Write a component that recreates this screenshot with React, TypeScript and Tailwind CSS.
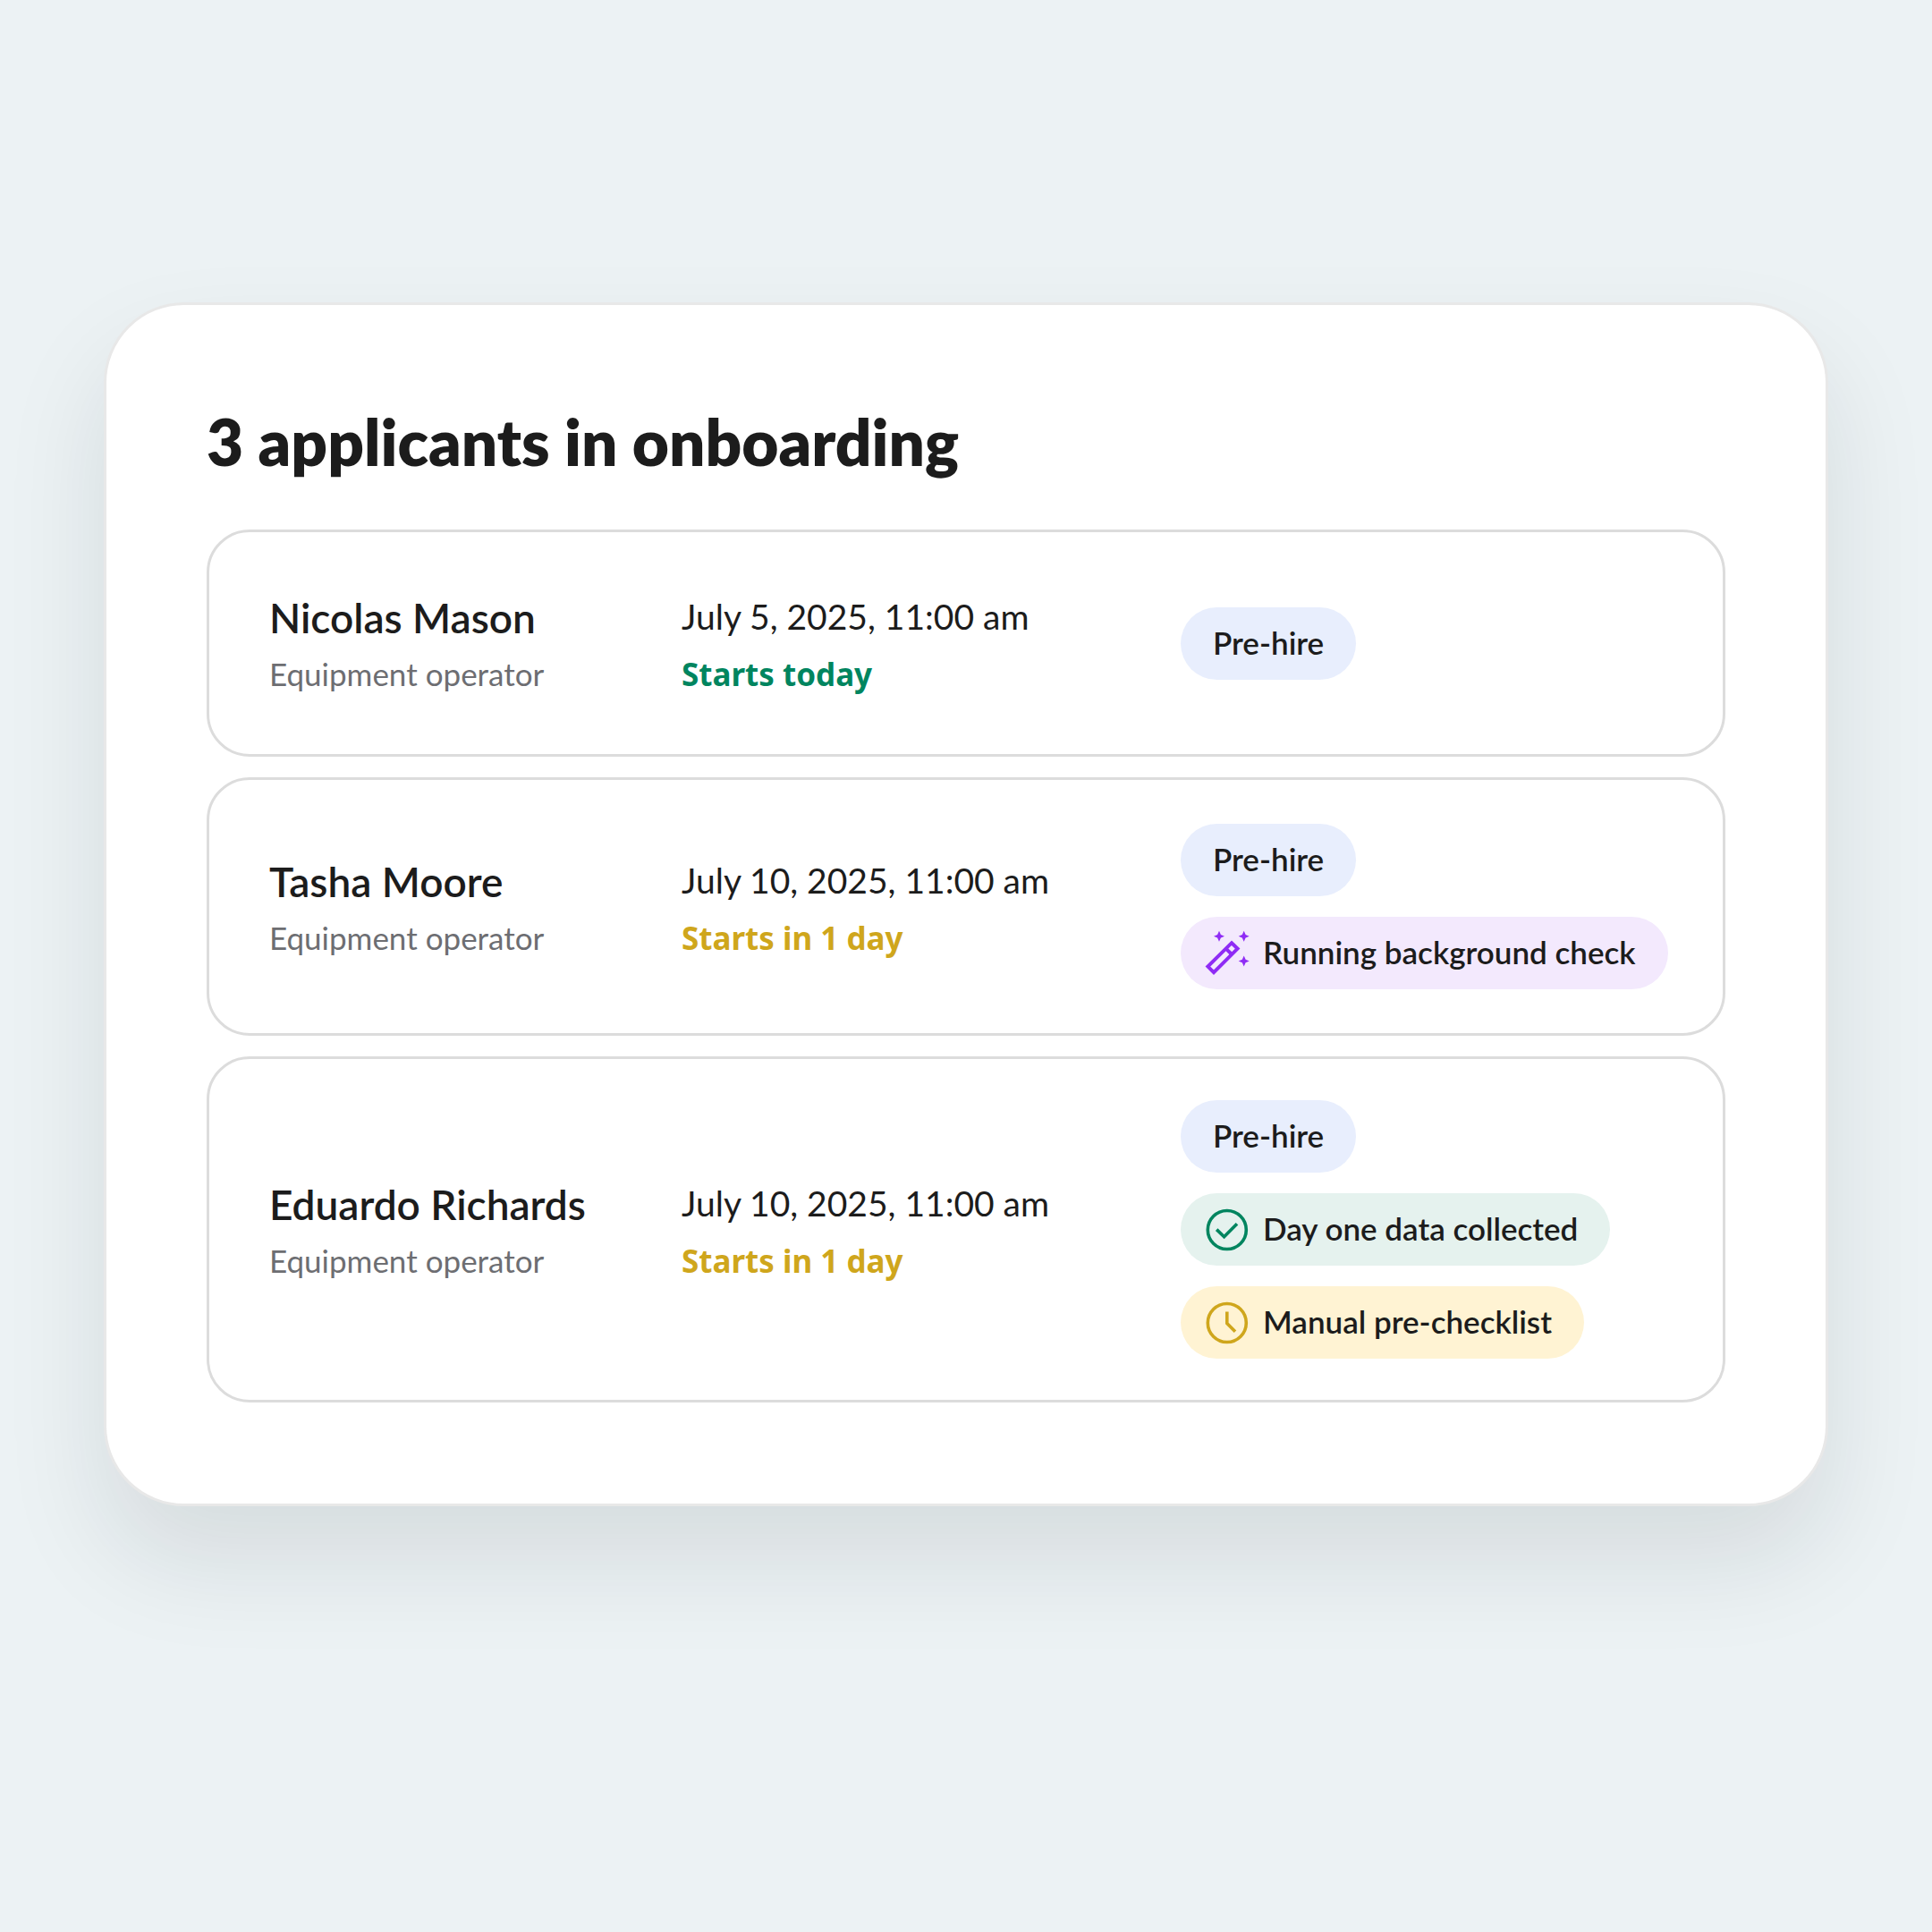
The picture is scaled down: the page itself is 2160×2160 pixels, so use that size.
import type { JSX } from "react";
import { clsx } from "clsx";

type TagKind = "stage" | "running" | "done" | "manual";

interface Tag {
  kind: TagKind;
  label: string;
}

interface Applicant {
  name: string;
  role: string;
  date: string;
  status: string;
  statusColor: string;
  height: string;
  tags: Tag[];
}

const applicants: Applicant[] = [
  {
    name: "Nicolas Mason",
    role: "Equipment operator",
    date: "July 5, 2025, 11:00 am",
    status: "Starts today",
    statusColor: "text-[#00855f]",
    height: "min-h-[254px]",
    tags: [{ kind: "stage", label: "Pre-hire" }],
  },
  {
    name: "Tasha Moore",
    role: "Equipment operator",
    date: "July 10, 2025, 11:00 am",
    status: "Starts in 1 day",
    statusColor: "text-[#cfa61c]",
    height: "min-h-[289px]",
    tags: [
      { kind: "stage", label: "Pre-hire" },
      { kind: "running", label: "Running background check" },
    ],
  },
  {
    name: "Eduardo Richards",
    role: "Equipment operator",
    date: "July 10, 2025, 11:00 am",
    status: "Starts in 1 day",
    statusColor: "text-[#cfa61c]",
    height: "min-h-[387px]",
    tags: [
      { kind: "stage", label: "Pre-hire" },
      { kind: "done", label: "Day one data collected" },
      { kind: "manual", label: "Manual pre-checklist" },
    ],
  },
];

const WandIcon = () => (
  <svg viewBox="0 0 56 56" className="size-14 text-[#8f2cf5]" aria-hidden="true">
    <g fill="none" stroke="currentColor" strokeWidth="4">
      <path d="M33 16.2 39.6 22.6 13 49.2 6.4 42.6Z" />
      <path d="M26.6 22.6 33.2 29" />
    </g>
    <g fill="currentColor">
      <path d="M19 2.8 20.9 7 25 8.8 20.9 10.6 19 14.8 17.1 10.6 13 8.8 17.1 7Z" />
      <path d="M46.7 2.8 48.6 7 52.7 8.8 48.6 10.6 46.7 14.8 44.8 10.6 40.7 8.8 44.8 7Z" />
      <path d="M46.7 30.5 48.6 34.7 52.7 36.5 48.6 38.3 46.7 42.5 44.8 38.3 40.7 36.5 44.8 34.7Z" />
    </g>
  </svg>
);

const CheckIcon = () => (
  <svg
    viewBox="0 0 56 56"
    className="size-14 text-[#00855f]"
    fill="none"
    stroke="currentColor"
    strokeWidth="3.6"
    aria-hidden="true"
  >
    <circle cx="27.8" cy="28" r="21.5" />
    <path d="M16.2 27.6 24.6 35.8 39 21.2" />
  </svg>
);

const ClockIcon = () => (
  <svg
    viewBox="0 0 56 56"
    className="size-14 text-[#cfa61c]"
    fill="none"
    stroke="currentColor"
    strokeWidth="3.6"
    aria-hidden="true"
  >
    <circle cx="27.8" cy="28" r="21.5" />
    <path d="M27.8 15.6V28.4L37 37.8" />
  </svg>
);

const tagIcons: Record<TagKind, JSX.Element | null> = {
  stage: null,
  running: <WandIcon />,
  done: <CheckIcon />,
  manual: <ClockIcon />,
};

const tagStyles: Record<TagKind, string> = {
  stage: "bg-[#e8eefd] px-9",
  running: "bg-[#f3e9fd] pl-6 pr-9",
  done: "bg-[#e5f2ee] pl-6 pr-9",
  manual: "bg-[#fff3d3] pl-6 pr-9",
};

const TagPill = ({ kind, label }: Tag) => (
  <li
    className={clsx(
      "flex h-[81px] items-center gap-3 rounded-full text-[35px] font-semibold leading-none whitespace-nowrap",
      tagStyles[kind]
    )}
  >
    {tagIcons[kind]}
    <span className="pb-0.5">{label}</span>
  </li>
);

const ApplicantRow = ({ applicant }: { applicant: Applicant }) => (
  <li
    className={clsx(
      "grid grid-cols-[461px_558px_1fr] items-center rounded-[48px] border-3 border-[#dcdcdc] pl-[67px] pr-14",
      applicant.height
    )}
  >
    <div className="pt-1 whitespace-nowrap">
      <h2 className="text-[46px] font-semibold leading-[64px]">
        {applicant.name}
      </h2>
      <p className="text-[35px] leading-[60px] text-[#6d6e72]">
        {applicant.role}
      </p>
    </div>
    <div className="pt-1 whitespace-nowrap">
      <p className="text-[39px] leading-[66px]">{applicant.date}</p>
      <p
        className={clsx(
          "font-['Noto_Sans',sans-serif] text-[35px] font-bold leading-[64px]",
          applicant.statusColor
        )}
      >
        {applicant.status}
      </p>
    </div>
    <ul className="flex flex-col items-start gap-[23px]">
      {applicant.tags.map((tag) => (
        <TagPill key={tag.label} {...tag} />
      ))}
    </ul>
  </li>
);

export default function App() {
  return (
    <main className="min-h-screen bg-[#ecf2f4] px-[116px] pt-[338px] pb-20 font-['Lato',sans-serif] text-[#1c1c1c]">
      <section className="rounded-[90px] border-3 border-[#e8e8e8] bg-white px-28 pt-[108px] pb-[113px] shadow-[0_60px_116px_rgba(20,30,36,0.1)]">
        <h1 className="text-[71px] font-extrabold leading-[90px]">
          3 applicants in onboarding
        </h1>
        <ul className="mt-[53px] flex flex-col gap-[23px]">
          {applicants.map((applicant) => (
            <ApplicantRow key={applicant.name} applicant={applicant} />
          ))}
        </ul>
      </section>
    </main>
  );
}
